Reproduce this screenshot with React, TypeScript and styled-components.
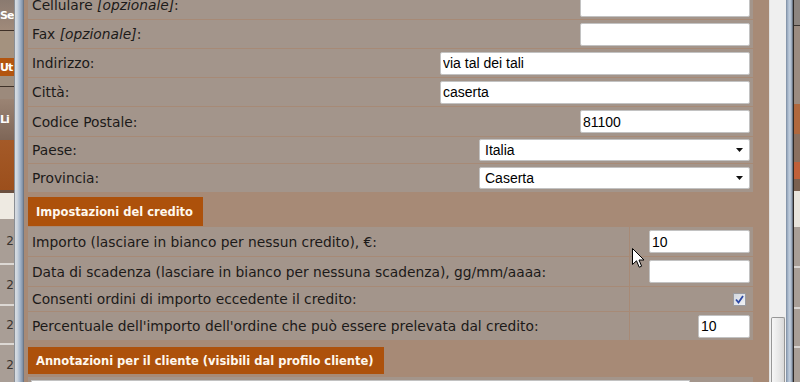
import React from 'react';
import styled, { createGlobalStyle } from 'styled-components';

const Global = createGlobalStyle`
  html, body { margin: 0; padding: 0; width: 800px; height: 382px; overflow: hidden; background: #a78a76; }
  #root { width: 800px; height: 382px; }
  * { box-sizing: border-box; }
`;

const Screen = styled.div`
  display: flex;
  width: 800px;
  height: 382px;
  overflow: hidden;
`;

/* ---------- background application strips ---------- */
const BgColumn = styled.div<{ $w: number; $edge?: boolean }>`
  width: ${(p) => p.$w}px;
  flex: none;
  display: flex;
  flex-direction: column;
  overflow: hidden;
  border-left: ${(p) => (p.$edge ? '1px solid #2e2a28' : 'none')};
`;

const Band = styled.div<{ $h: number; $bg: string; $color?: string; $line?: string; $end?: boolean }>`
  height: ${(p) => p.$h}px;
  flex: none;
  background: ${(p) => p.$bg};
  color: ${(p) => p.$color || '#fff'};
  border-bottom: ${(p) => p.$line || 'none'};
  display: flex;
  align-items: center;
  justify-content: ${(p) => (p.$end ? 'flex-end' : 'flex-start')};
  font: bold 11px 'DejaVu Sans', sans-serif;
  letter-spacing: -1px;
  white-space: nowrap;
  overflow: hidden;
`;

const NumText = styled.span`
  font: 12px 'DejaVu Sans', sans-serif;
  color: #3a3430;
  margin-right: 1px;
`;

const Frame = styled.div<{ $w: number; $right?: boolean }>`
  width: ${(p) => p.$w}px;
  flex: none;
  background: ${(p) =>
    p.$right
      ? 'linear-gradient(to right, #7b8ba0 0px, #a9b9cd 2px, #c4d0de 4px, #8d9cb0 6px, #4a525c 7px)'
      : 'linear-gradient(to right, #3e4248 0px, #d6dbe1 1px, #cfd6de 3px, #b2c1d3 5px, #98a9bf 7px, #7d8c9f 9px, #5c6470 10px)'};
`;

/* ---------- dialog content ---------- */
const Content = styled.div`
  width: 745px;
  flex: none;
  background: #a78a76;
  padding: 0 16px 0 4px;
  overflow: hidden;
  position: relative;
`;

const Form = styled.div`
  margin-top: -9px;
  display: flex;
  flex-direction: column;
`;

const Table = styled.div`
  display: flex;
  flex-direction: column;
  gap: 1px;
`;

const Row = styled.div<{ $h: number }>`
  height: ${(p) => p.$h}px;
  background: #a3958b;
  display: flex;
  align-items: center;
  justify-content: space-between;
  padding: 0 3px 0 4px;
`;

const Label = styled.span`
  font: 13.8px 'DejaVu Sans', Verdana, sans-serif;
  color: #1c1a19;
  white-space: nowrap;
`;

const Opt = styled.i`
  font-style: italic;
`;

const TextInput = styled.input<{ $w: number; $mr?: number }>`
  width: ${(p) => p.$w}px;
  height: 23px;
  margin: 0 ${(p) => p.$mr || 0}px 0 0;
  border: 1px solid #c2c2c2;
  border-radius: 2px;
  background: #fff;
  padding: 0 2px;
  font: 14px 'Liberation Sans', Arial, sans-serif;
  color: #000;
  outline: none;
`;

const SelectBox = styled.div<{ $w: number }>`
  width: ${(p) => p.$w}px;
  height: 22px;
  border: 1px solid #c2c2c2;
  border-radius: 2px;
  background: #fff;
  display: flex;
  align-items: center;
  justify-content: space-between;
  padding: 0 6px 0 5px;
  font: 14px 'Liberation Sans', Arial, sans-serif;
  color: #000;
`;

const Heading = styled.div<{ $h: number; $mt: number }>`
  align-self: flex-start;
  height: ${(p) => p.$h}px;
  margin-top: ${(p) => p.$mt}px;
  margin-bottom: 1px;
  padding: 0 10px 0 8px;
  background: #ad510b;
  color: #fff8ee;
  font: bold 11.5px 'DejaVu Sans', Verdana, sans-serif;
  display: flex;
  align-items: center;
  white-space: nowrap;
`;

const GridRow = styled.div<{ $h: number }>`
  height: ${(p) => p.$h}px;
  display: grid;
  grid-template-columns: 601px 1fr;
  column-gap: 1px;
`;

const LabelCell = styled.div`
  background: #a3958b;
  display: flex;
  align-items: center;
  padding-left: 4px;
`;

const ValueCell = styled.div`
  background: #a3958b;
  display: flex;
  align-items: center;
  justify-content: flex-end;
  padding-right: 3px;
`;

const CheckBox = styled.span`
  width: 13px;
  height: 13px;
  margin-right: 4px;
  border: 1px solid #9a9ca2;
  background: linear-gradient(135deg, #d3d8e0, #f1f2f4);
  display: flex;
  align-items: center;
  justify-content: center;
`;

const NotesRow = styled.div`
  margin-top: 2px;
  height: 40px;
  background: #a3958b;
  padding: 3px 0 0 3px;
`;

const NotesArea = styled.div`
  width: 659px;
  height: 80px;
  background: #fff;
  border: 1px solid #c2c2c2;
`;

const Cursor = styled.svg`
  position: absolute;
  left: 608px;
  top: 248px;
`;

/* ---------- scrollbar ---------- */
const ScrollTrack = styled.div`
  width: 17px;
  flex: none;
  background: #efefef;
  border-left: 1px solid #e2e2e2;
  display: flex;
  flex-direction: column;
  justify-content: flex-end;
  padding: 0 1px 0 1px;
`;

const ScrollThumb = styled.div`
  height: 65px;
  border: 1px solid #979797;
  border-bottom: none;
  border-radius: 2px 2px 0 0;
  background: linear-gradient(to right, #f6f6f6, #e6e6e6 60%, #d8d8d8);
`;

const Arrow = () => (
  <svg width="7" height="4" viewBox="0 0 7 4">
    <path d="M0 0 H7 L3.5 4 Z" fill="#111" />
  </svg>
);

const leftBands = [
  { h: 31, bg: 'linear-gradient(#8a7a70, #a08a7a)', text: 'Se', line: '1px solid #3f3128' },
  { h: 27, bg: '#a4927f' },
  { h: 18, bg: '#b3550f', text: 'Ut' },
  { h: 11, bg: '#a09080', line: '1px solid #3f3229' },
  { h: 12, bg: '#9c8a7c' },
  { h: 41, bg: 'linear-gradient(#9b8474, #7e6657)', text: 'Li' },
  { h: 53, bg: 'linear-gradient(#a45a28, #9c4f1c)', line: '3px solid #6a5040' },
  { h: 26, bg: '#eeeae2' },
];

const numberBands = [46, 41, 39, 40];

const rightBands = [
  { h: 26, bg: '#8d8580', line: '1px solid #3a3430' },
  { h: 78, bg: '#9b8b80' },
  { h: 30, bg: '#b0683e' },
  { h: 28, bg: '#8a7060' },
  { h: 17, bg: '#c0603a' },
  { h: 12, bg: '#7a6050' },
  { h: 36, bg: '#e8e4dc' },
  { h: 41, bg: '#a89e96', line: '2px solid #d8d4d0' },
  { h: 41, bg: '#a89e96', line: '2px solid #d8d4d0' },
  { h: 39, bg: '#a89e96', line: '2px solid #d8d4d0' },
  { h: 40, bg: '#a89e96' },
];

export default function App() {
  return (
    <>
      <Global />
      <Screen>
        <BgColumn $w={14}>
          {leftBands.map((b, i) => (
            <Band key={i} $h={b.h} $bg={b.bg} $line={b.line}>
              {b.text}
            </Band>
          ))}
          {numberBands.map((h, i) => (
            <Band key={'n' + i} $h={h} $bg="#a99e96" $line={i < 3 ? '2px solid #dcd8d4' : undefined} $end>
              <NumText>2</NumText>
            </Band>
          ))}
        </BgColumn>
        <Frame $w={10} />
        <Content>
          <Form>
            <Table>
              <Row $h={28}>
                <Label>
                  Cellulare <Opt>[opzionale]</Opt>:
                </Label>
                <TextInput $w={170} defaultValue="" />
              </Row>
              <Row $h={28}>
                <Label>
                  Fax <Opt>[opzionale]</Opt>:
                </Label>
                <TextInput $w={170} defaultValue="" />
              </Row>
              <Row $h={28}>
                <Label>Indirizzo:</Label>
                <TextInput $w={310} defaultValue="via tal dei tali" />
              </Row>
              <Row $h={28}>
                <Label>Città:</Label>
                <TextInput $w={310} defaultValue="caserta" />
              </Row>
              <Row $h={29}>
                <Label>Codice Postale:</Label>
                <TextInput $w={170} defaultValue="81100" />
              </Row>
              <Row $h={26}>
                <Label>Paese:</Label>
                <SelectBox $w={271}>
                  <span>Italia</span>
                  <Arrow />
                </SelectBox>
              </Row>
              <Row $h={28}>
                <Label>Provincia:</Label>
                <SelectBox $w={271}>
                  <span>Caserta</span>
                  <Arrow />
                </SelectBox>
              </Row>
            </Table>

            <Heading $h={29} $mt={5}>Impostazioni del credito</Heading>

            <Table>
              <GridRow $h={29}>
                <LabelCell>
                  <Label>Importo (lasciare in bianco per nessun credito), €:</Label>
                </LabelCell>
                <ValueCell>
                  <TextInput $w={101} defaultValue="10" />
                </ValueCell>
              </GridRow>
              <GridRow $h={29}>
                <LabelCell>
                  <Label>Data di scadenza (lasciare in bianco per nessuna scadenza), gg/mm/aaaa:</Label>
                </LabelCell>
                <ValueCell>
                  <TextInput $w={101} defaultValue="" />
                </ValueCell>
              </GridRow>
              <GridRow $h={24}>
                <LabelCell>
                  <Label>Consenti ordini di importo eccedente il credito:</Label>
                </LabelCell>
                <ValueCell>
                  <CheckBox>
                    <svg width="9" height="9" viewBox="0 0 9 9">
                      <path d="M1 4.5 L3.5 7.5 L8 1" fill="none" stroke="#2d49a6" strokeWidth="1.8" />
                    </svg>
                  </CheckBox>
                </ValueCell>
              </GridRow>
              <GridRow $h={28}>
                <LabelCell>
                  <Label>Percentuale dell'importo dell'ordine che può essere prelevata dal credito:</Label>
                </LabelCell>
                <ValueCell>
                  <TextInput $w={52} defaultValue="10" />
                </ValueCell>
              </GridRow>
            </Table>

            <Heading $h={27} $mt={7}>Annotazioni per il cliente (visibili dal profilo cliente)</Heading>

            <NotesRow>
              <NotesArea />
            </NotesRow>
          </Form>
          <Cursor width="13" height="21" viewBox="0 0 13 21">
            <path d="M0.5 0.5 V16.5 L4.5 12.8 L7.2 19.2 L9.6 18.2 L7 12 H12 Z" fill="#fff" stroke="#000" strokeWidth="1" />
          </Cursor>
        </Content>
        <ScrollTrack>
          <ScrollThumb />
        </ScrollTrack>
        <Frame $w={7} $right />
        <BgColumn $w={7} $edge>
          {rightBands.map((b, i) => (
            <Band key={i} $h={b.h} $bg={b.bg} $line={b.line} />
          ))}
        </BgColumn>
      </Screen>
    </>
  );
}
